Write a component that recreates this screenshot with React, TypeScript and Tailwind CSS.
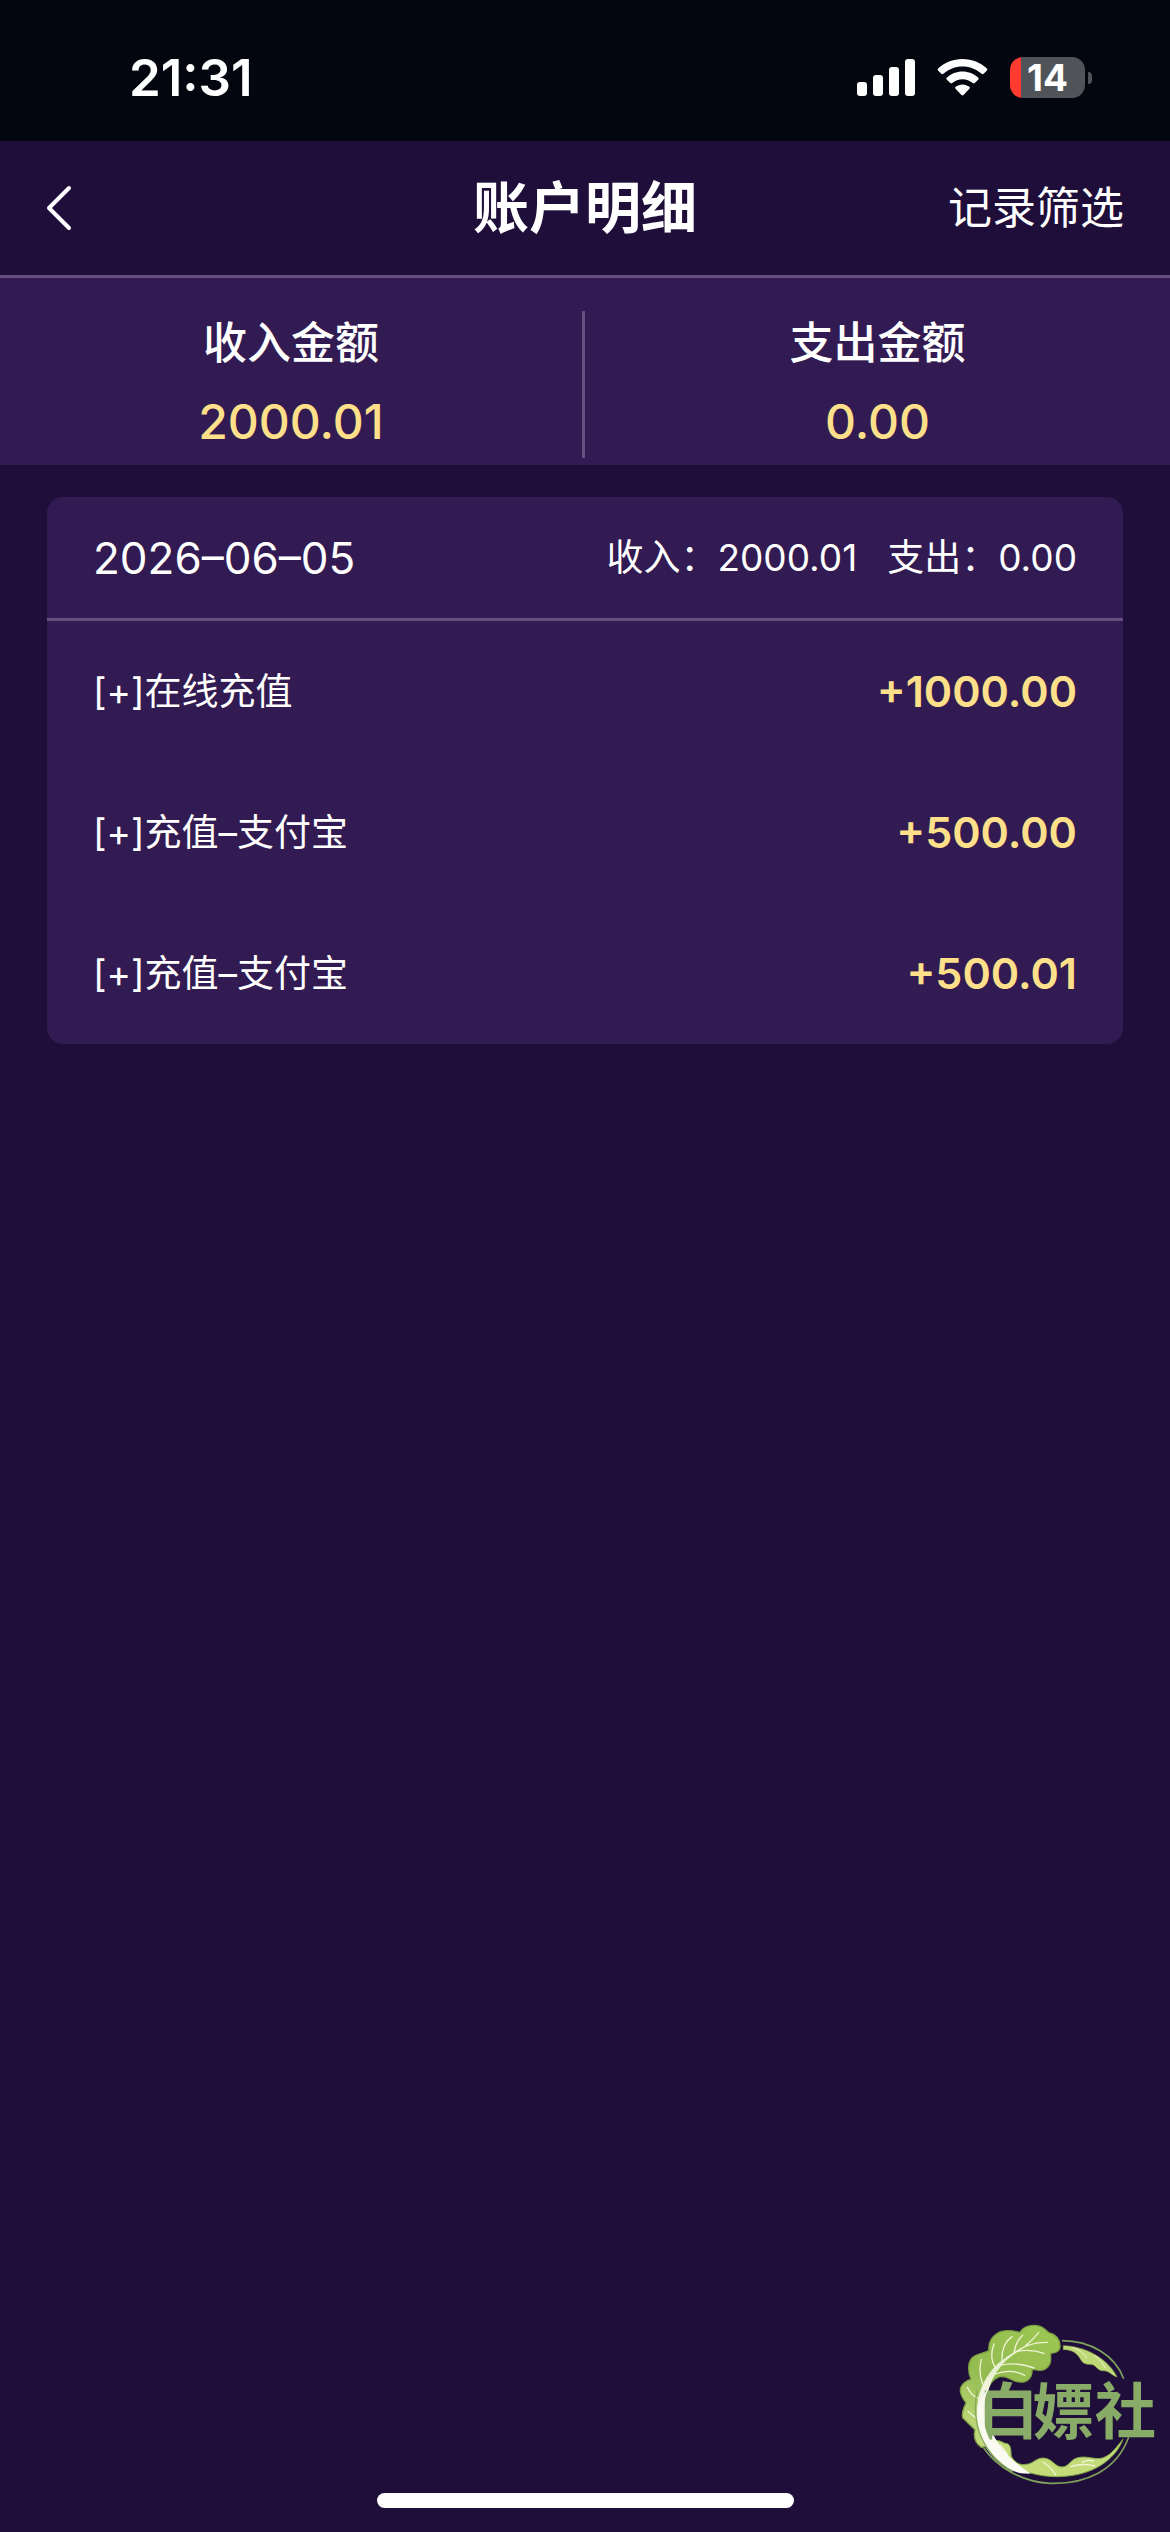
const summary = [
  { label: '收入金额', value: '2000.01' },
  { label: '支出金额', value: '0.00' },
];

const totals = [
  { label: '收入：', value: '2000.01' },
  { label: '支出：', value: '0.00' },
];

const records = [
  { label: '[+]在线充值', amount: '+1000.00' },
  { label: '[+]充值–支付宝', amount: '+500.00' },
  { label: '[+]充值–支付宝', amount: '+500.01' },
];

function SignalIcon() {
  return (
    <svg className="h-[37px] w-[58px]" viewBox="0 0 174 111" fill="#fff" aria-hidden="true">
      <rect x="0" y="69" width="30" height="42" rx="9" />
      <rect x="48" y="48" width="30" height="63" rx="9" />
      <rect x="96" y="24" width="30" height="87" rx="9" />
      <rect x="144" y="0" width="30" height="111" rx="9" />
    </svg>
  );
}

function WifiIcon() {
  return (
    <svg className="h-[37px] w-[51px]" viewBox="0 0 152 112" fill="#fff" aria-hidden="true">
      <path d="M76 0C105 0 131 11 150 29Q153 32 150 35L140 45Q137 48 134 45C118 31 98 23 76 23S34 31 18 45Q15 48 12 45L2 35Q-1 32 2 29C21 11 47 0 76 0Z" />
      <path d="M76 38C94 38 111 45 123 56Q127 59 124 62L113 73Q110 76 107 73C98 66 88 61 76 61S54 66 45 73Q42 76 39 73L28 62Q25 59 29 56C41 45 58 38 76 38Z" />
      <path d="M76 77C84 77 91 80 97 84Q100 87 97 90L79 109Q76 112 73 109L55 90Q52 87 55 84C61 80 68 77 76 77Z" />
    </svg>
  );
}

function Battery() {
  return (
    <div className="flex items-center gap-[3px]">
      <div className="flex h-[41px] w-[75px] items-center justify-center rounded-[13px] bg-[linear-gradient(to_right,#ff3b30_11px,#505459_11px)]">
        <span className="text-[37px] leading-[41px] font-bold">14</span>
      </div>
      <span className="h-[12px] w-[4px] rounded-r-full bg-[#505459]" />
    </div>
  );
}

function CabbageLogo() {
  return (
    <svg className="absolute right-0 bottom-8 h-[200px] w-[230px]" viewBox="0 0 690 600" role="img" aria-label="白嫖社">
      <defs>
        <linearGradient id="leaf" x1="0.8" y1="0" x2="0.2" y2="1">
          <stop offset="0" stopColor="#9cc653" />
          <stop offset="0.55" stopColor="#93bb50" />
          <stop offset="1" stopColor="#c5dc80" />
        </linearGradient>
        <linearGradient id="stem" x1="0" y1="0" x2="0" y2="1">
          <stop offset="0" stopColor="#e3edc4" />
          <stop offset="0.4" stopColor="#f4f6e6" />
          <stop offset="1" stopColor="#fdfdf8" />
        </linearGradient>
      </defs>
      <path
        d="M366 122C450 122 525 165 551 236M566 412C530 510 440 553 330 550C250 546 170 505 125 435"
        fill="none"
        stroke="#7fa25c"
        strokeWidth="5"
      />
      <path
        d="M370 137C440 139 505 178 531 231C515 226 507 211 489 212C470 213 470 193 450 193C430 193 427 187 418 172C407 154 388 148 370 149Z"
        fill="#c0d977"
        stroke="#8fb154"
        strokeWidth="2"
      />
      <path d="M398 143Q425 150 441 175M462 166Q486 182 496 205" fill="none" stroke="#eef4cf" strokeWidth="3" />
      <path
        d="M168 422C184 420 190 432 202 431C215 436 212 458 214 469C224 487 240 497 258 493C280 492 286 474 310 474C338 475 342 500 366 501C390 499 388 479 414 473C444 466 466 482 490 473C515 464 530 440 549 418C524 482 455 529 352 530C260 530 190 490 160 445Z"
        fill="#c3db79"
        stroke="#82a84d"
        strokeWidth="3"
      />
      <path
        d="M308 486Q332 500 348 526M392 500Q430 488 466 498M425 488Q442 478 462 483M180 434Q196 450 208 476"
        fill="none"
        stroke="#f1f6d8"
        strokeWidth="4"
      />
      <path
        d="M124 442C106 430 100 410 105 389C92 378 84 368 68 353C64 330 74 320 78 308C62 288 56 270 66 256C74 244 86 240 93 238C84 214 84 190 94 176C106 160 128 162 147 152C144 130 154 112 172 100C192 86 220 92 240 97C250 80 278 70 302 80C316 86 322 96 328 99C346 102 360 118 360 136C362 150 352 160 332 160C330 168 340 196 312 209C302 214 285 209 276 208C278 232 262 248 240 246C212 245 206 226 180 230C150 238 138 270 134 310C128 360 146 400 170 430Z"
        fill="url(#leaf)"
        stroke="#7da143"
        strokeWidth="4"
      />
      <path
        d="M236 154C190 170 132 214 114 300C100 380 126 446 180 490C210 512 240 524 272 520C238 500 190 462 160 404C138 356 134 306 148 262C162 220 190 180 236 154Z"
        fill="url(#stem)"
      />
      <path
        d="M202 172C240 148 264 126 322 127M232 154Q272 146 312 160M256 138Q280 118 296 98M222 160Q226 126 248 106M186 186C184 150 192 126 216 110M168 205Q146 174 162 132M180 196Q226 184 282 204M166 222Q210 204 254 226M128 252Q114 216 124 178M116 296Q94 288 82 262M110 356Q94 344 84 334"
        fill="none"
        stroke="#eef4d3"
        strokeWidth="4"
        strokeLinecap="round"
      />
      <path d="M112 270C92 370 126 460 218 515" fill="none" stroke="#86a957" strokeWidth="4" />
      <text x="112 278 464" y="402" fontSize="184" fontWeight="700" fill="#88ac68">
        白嫖社
      </text>
      <path
        d="M148 262C128 300 120 360 148 416C172 460 210 498 272 520C220 518 160 480 132 420C106 360 112 300 148 262Z"
        fill="#fafbf2"
      />
    </svg>
  );
}

export default function App() {
  return (
    <div className="relative flex min-h-screen flex-col bg-[#200e3a] font-['Inter','Noto_Sans_CJK_SC',sans-serif] text-white">
      <div className="flex h-[141px] items-center justify-between bg-[#03060f] pt-[14px] pr-[78px] pl-[129px]">
        <span className="text-[51px] leading-none font-semibold">21:31</span>
        <div className="flex items-center gap-[22px]">
          <SignalIcon />
          <WifiIcon />
          <Battery />
        </div>
      </div>

      <header className="grid h-[137px] grid-cols-[1fr_auto_1fr] items-center border-b-[3px] border-[#664f7d] px-[46px]">
        <button type="button" aria-label="返回" className="justify-self-start">
          <svg
            className="h-[46px] w-[26px]"
            viewBox="0 0 26 46"
            fill="none"
            stroke="#fff"
            strokeWidth="4"
            strokeLinecap="round"
            strokeLinejoin="round"
            aria-hidden="true"
          >
            <path d="M23 3L3 23L23 43" />
          </svg>
        </button>
        <h1 className="text-[56px] leading-none font-bold">账户明细</h1>
        <button type="button" className="justify-self-end text-[44px] leading-none">
          记录筛选
        </button>
      </header>

      <section className="grid grid-cols-2 bg-[#321b52] pt-[33px] pb-[7px] text-center">
        {summary.map((item) => (
          <div key={item.label} className="flex flex-col gap-[14px] border-[#664f7d] pb-[3px] first:border-r-[3px]">
            <span className="text-[44px] leading-[64px] font-medium">{item.label}</span>
            <span className="text-[48px] leading-[66px] font-medium text-[#ffe08a]">{item.value}</span>
          </div>
        ))}
      </section>

      <main className="px-[47px] pt-8">
        <section className="overflow-hidden rounded-2xl bg-[#321b52]">
          <div className="flex h-[124px] items-center justify-between border-b-[3px] border-[#664f7d] px-[46px]">
            <h2 className="text-[44px] leading-none">2026–06–05</h2>
            <div className="flex gap-[30px] leading-none">
              {totals.map((total) => (
                <p key={total.label} className="flex items-baseline">
                  <span className="text-[37px]">{total.label}</span>
                  <span className="text-[37px]">{total.value}</span>
                </p>
              ))}
            </div>
          </div>
          <ul>
            {records.map((record) => (
              <li key={record.amount} className="flex h-[141px] items-center justify-between px-[46px]">
                <span className="text-[37px] leading-none">{record.label}</span>
                <span className="text-[43px] leading-none font-semibold text-[#ffe08a]">{record.amount}</span>
              </li>
            ))}
          </ul>
        </section>
      </main>

      <CabbageLogo />
      <div className="mx-auto mt-auto mb-6 h-[15px] w-[417px] rounded-full bg-white" />
    </div>
  );
}
